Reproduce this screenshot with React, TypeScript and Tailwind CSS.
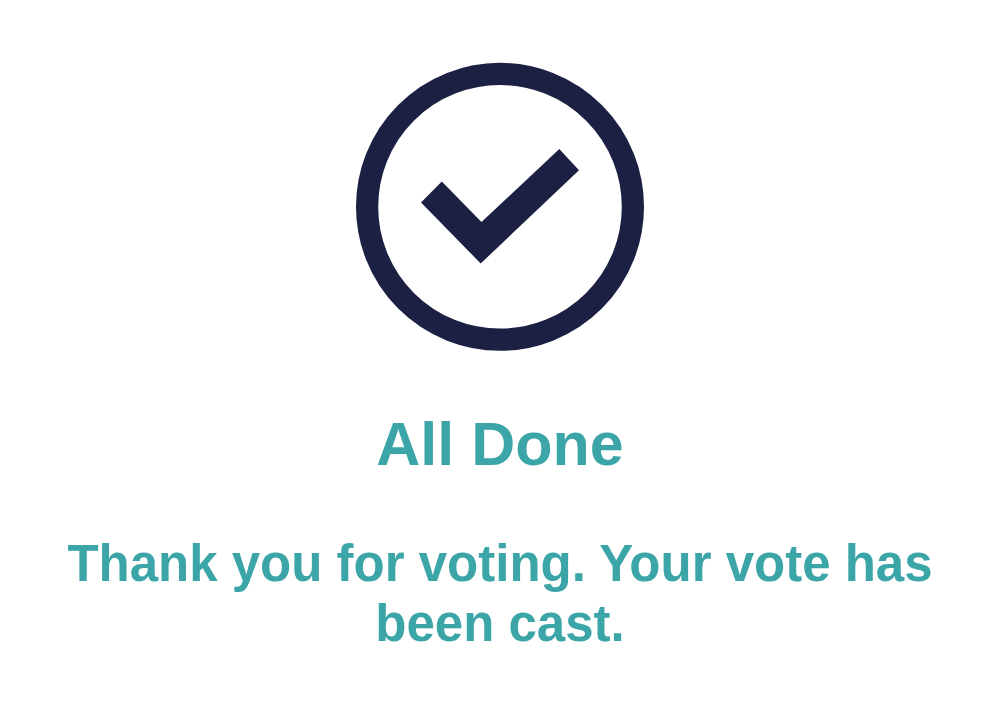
export default function App() {
  return (
    <main className="flex min-h-screen flex-col items-center bg-white px-10 pt-[62px] pb-12 text-center font-['Liberation_Sans',Arial,sans-serif] font-bold text-[#3ca5a8]">
      <svg className="size-[290px]" viewBox="0 0 290 290" fill="none" aria-hidden="true">
        <circle cx="145" cy="144.8" r="132.9" stroke="#1c2143" strokeWidth="22.2" />
        <path d="M66 140.5 L86.8 119.5 L126.5 160 L204.3 87 L224 108.3 L125.7 201.5 Z" fill="#1c2143" />
      </svg>
      <h1 className="mt-14 text-[61px] leading-[72px]">All Done</h1>
      <p className="mt-[54px] text-[51px] leading-[60px]">Thank you for voting. Your vote has been cast.</p>
    </main>
  );
}
